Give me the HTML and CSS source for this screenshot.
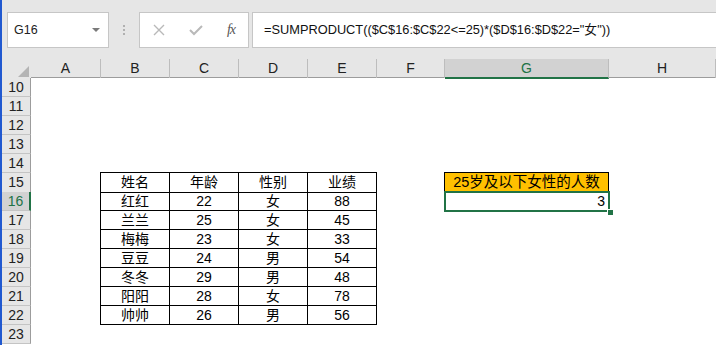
FILE: index.html
```html
<html lang="zh">
<head>
  <meta charset="UTF-8">
  <link rel="stylesheet" href="styles.css">
</head>
<body>
<div class="app">
  <div class="edge"></div>
  <div class="main">
    <div class="toolbar">
      <div class="namebox">
        <span class="namebox-text">G16</span>
        <span class="namebox-arrow"></span>
      </div>
      <div class="grip"><i></i><i></i><i></i></div>
      <div class="fxbox">
        <svg class="fx-icon" width="12" height="12" viewBox="0 0 12 12">
          <path d="M1 1 L11 11 M11 1 L1 11" stroke="#b9b9b9" stroke-width="1.4" fill="none"/>
        </svg>
        <svg class="fx-icon" width="14" height="12" viewBox="0 0 14 12">
          <path d="M1 6 L5 10 L13 2" stroke="#b9b9b9" stroke-width="2" fill="none"/>
        </svg>
        <span class="fx-label">fx</span>
      </div>
      <div class="formula">=SUMPRODUCT(($C$16:$C$22&lt;=25)*($D$16:$D$22="女"))</div>
    </div>

    <div class="sheet">
      <div class="row hdr">
        <div class="rh corner">
          <svg width="11" height="11" viewBox="0 0 11 11"><path d="M11 0 L11 11 L0 11 Z" fill="#b4b4b4"/></svg>
        </div>
        <div class="ch">A</div>
        <div class="ch">B</div>
        <div class="ch">C</div>
        <div class="ch">D</div>
        <div class="ch">E</div>
        <div class="ch">F</div>
        <div class="ch ch-sel">G</div>
        <div class="ch">H</div>
      </div>
      <div class="row"><div class="rh">10</div></div>
      <div class="row"><div class="rh">11</div></div>
      <div class="row"><div class="rh">12</div></div>
      <div class="row"><div class="rh">13</div></div>
      <div class="row"><div class="rh">14</div></div>
      <div class="row">
        <div class="rh">15</div>
        <div class="t cb top">姓名</div>
        <div class="t cc top">年龄</div>
        <div class="t cd top">性别</div>
        <div class="t ce top">业绩</div>
        <div class="cg label">25岁及以下女性的人数</div>
      </div>
      <div class="row">
        <div class="rh rh-sel">16</div>
        <div class="t cb">红红</div>
        <div class="t cc">22</div>
        <div class="t cd">女</div>
        <div class="t ce">88</div>
        <div class="cg result">3</div>
      </div>
      <div class="row">
        <div class="rh">17</div>
        <div class="t cb">兰兰</div>
        <div class="t cc">25</div>
        <div class="t cd">女</div>
        <div class="t ce">45</div>
      </div>
      <div class="row">
        <div class="rh">18</div>
        <div class="t cb">梅梅</div>
        <div class="t cc">23</div>
        <div class="t cd">女</div>
        <div class="t ce">33</div>
      </div>
      <div class="row">
        <div class="rh">19</div>
        <div class="t cb">豆豆</div>
        <div class="t cc">24</div>
        <div class="t cd">男</div>
        <div class="t ce">54</div>
      </div>
      <div class="row">
        <div class="rh">20</div>
        <div class="t cb">冬冬</div>
        <div class="t cc">29</div>
        <div class="t cd">男</div>
        <div class="t ce">48</div>
      </div>
      <div class="row">
        <div class="rh">21</div>
        <div class="t cb">阳阳</div>
        <div class="t cc">28</div>
        <div class="t cd">女</div>
        <div class="t ce">78</div>
      </div>
      <div class="row">
        <div class="rh">22</div>
        <div class="t cb">帅帅</div>
        <div class="t cc">26</div>
        <div class="t cd">男</div>
        <div class="t ce">56</div>
      </div>
      <div class="row"><div class="rh">23</div></div>
    </div>
  </div>
</div>
</body>
</html>
```

FILE: styles.css
```css
body {
  margin: 0;
  width: 716px;
  height: 345px;
  overflow: hidden;
  background-color: #fff;
  font-family: "Liberation Sans", "Noto Sans CJK SC", sans-serif;
  color: #000;
}

.app {
  display: flex;
  height: 345px;
}

.edge {
  width: 2px;
  flex: none;
  background-color: #2159d0;
}

.main {
  flex: 1;
  min-width: 0;
  overflow: hidden;
}

/* barra de fórmulas */
.toolbar {
  display: flex;
  align-items: flex-start;
  height: 59px;
  box-sizing: border-box;
  padding-top: 12px;
  padding-left: 5px;
  background-color: #e6e6e6;
}

.namebox {
  display: flex;
  align-items: center;
  justify-content: space-between;
  width: 102px;
  height: 36px;
  box-sizing: border-box;
  border: 1px solid #c6c6c6;
  background-color: #fff;
  padding: 0 8px 0 6px;
  font-size: 12.5px;
  color: #222;
}

.namebox-arrow {
  width: 0;
  height: 0;
  border-left: 4px solid transparent;
  border-right: 4px solid transparent;
  border-top: 4px solid #7a7a7a;
}

.grip {
  display: flex;
  flex-direction: column;
  gap: 2px;
  width: 30px;
  align-items: center;
  padding-top: 13px;
}

.grip i {
  display: block;
  width: 2px;
  height: 2px;
  background-color: #b0b0b0;
}

.fxbox {
  display: flex;
  align-items: center;
  justify-content: space-between;
  width: 110px;
  height: 36px;
  box-sizing: border-box;
  border: 1px solid #c6c6c6;
  background-color: #fff;
  padding: 0 13px 0 13px;
}

.fx-label {
  font-family: "Liberation Serif", serif;
  font-style: italic;
  font-size: 14px;
  color: #555;
  letter-spacing: -1px;
}

.formula {
  flex: 1;
  height: 36px;
  box-sizing: border-box;
  margin-left: 3px;
  margin-right: -2px;
  border: 1px solid #c6c6c6;
  background-color: #fff;
  padding-left: 11px;
  font-size: 12.8px;
  line-height: 34px;
  color: #111;
  white-space: nowrap;
}

/* hoja */
.row {
  display: grid;
  grid-template-columns: 29px 70px 69px 69px 69px 69px 68px 164px 1fr;
  height: 19px;
  font-size: 14px;
}

.rh {
  grid-column: 1;
  box-sizing: border-box;
  border-right: 1px solid #9c9c9c;
  border-bottom: 1px solid #c4c4c4;
  background-color: #e6e6e6;
  text-align: center;
  line-height: 18px;
  color: #222;
}

.rh-sel {
  background-color: #d2d2d2;
  border-right: 2px solid #217346;
  color: #217346;
}

.hdr {
  background-color: #e6e6e6;
  border-bottom: 1px solid #9c9c9c;
  box-sizing: border-box;
}

.hdr .rh {
  border-bottom: none;
  border-right: none;
}

.corner {
  display: flex;
  align-items: flex-end;
  justify-content: flex-end;
  padding: 0 2px 1px 0;
}

.ch {
  box-sizing: border-box;
  border-right: 1px solid #bdbdbd;
  text-align: center;
  line-height: 18px;
  color: #222;
}

.ch-sel {
  background-color: #d2d2d2;
  border-bottom: 2px solid #217346;
  color: #217346;
  margin-bottom: -1px;
}

.cb { grid-column: 3; }
.cc { grid-column: 4; }
.cd { grid-column: 5; }
.ce { grid-column: 6; }
.cg { grid-column: 8; }

.t {
  box-sizing: border-box;
  border-right: 1px solid #000;
  border-bottom: 1px solid #000;
  text-align: center;
  line-height: 18px;
}

.t.cb {
  border-left: 1px solid #000;
  margin-left: -1px;
}

.t.top {
  border-top: 1px solid #000;
  margin-top: -1px;
  line-height: 19px;
}

.label {
  box-sizing: border-box;
  margin: -1px 0 0 -1px;
  border: 1px solid #000;
  background-color: #ffc000;
  text-align: center;
  line-height: 18px;
  font-size: 14.5px;
  white-space: nowrap;
}

.result {
  position: relative;
  text-align: right;
  padding-right: 4px;
  line-height: 19px;
  outline: 2px solid #217346;
  outline-offset: -1px;
}

.result::after {
  content: "";
  position: absolute;
  right: -4px;
  bottom: -4px;
  width: 5px;
  height: 5px;
  background-color: #217346;
  border: 1px solid #fff;
  border-right: none;
  border-bottom: none;
}
```
